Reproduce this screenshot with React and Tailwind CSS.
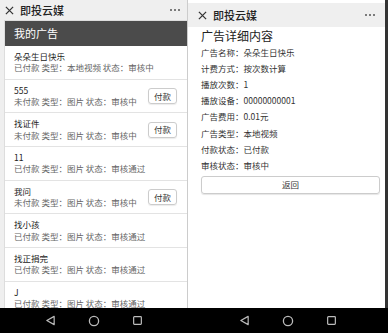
import React from 'react'

const font = { fontFamily: '"Noto Sans CJK SC", "Noto Sans", sans-serif' }

const ads = [
  { name: '朵朵生日快乐', paid: '已付款', type: '本地视频', status: '审核中', pay: false },
  { name: '555', paid: '未付款', type: '图片', status: '审核中', pay: true },
  { name: '找证件', paid: '未付款', type: '图片', status: '审核中', pay: true },
  { name: '11', paid: '已付款', type: '图片', status: '审核通过', pay: false },
  { name: '我问', paid: '未付款', type: '图片', status: '审核中', pay: true },
  { name: '找小孩', paid: '已付款', type: '图片', status: '审核通过', pay: false },
  { name: '找正捐完', paid: '已付款', type: '图片', status: '审核通过', pay: false },
  { name: 'J', paid: '已付款', type: '图片', status: '审核通过', pay: false },
]

const details = [
  ['广告名称', '朵朵生日快乐'],
  ['计费方式', '按次数计算'],
  ['播放次数', '1'],
  ['播放设备', '00000000001'],
  ['广告费用', '0.01元'],
  ['广告类型', '本地视频'],
  ['付款状态', '已付款'],
  ['审核状态', '审核中'],
]

const CloseIcon = () => (
  <svg width="9" height="9" viewBox="0 0 10 10" className="shrink-0">
    <path d="M1 1 L9 9 M9 1 L1 9" stroke="#333" strokeWidth="1.4" />
  </svg>
)

const Dots = () => (
  <span className="flex gap-[2px]">
    <span className="w-[2px] h-[2px] rounded-full bg-[#555]" />
    <span className="w-[2px] h-[2px] rounded-full bg-[#555]" />
    <span className="w-[2px] h-[2px] rounded-full bg-[#555]" />
  </span>
)

const NavIcons = () => (
  <div className="flex-1 flex items-center justify-center gap-[32px]">
    <svg width="11" height="11" viewBox="0 0 12 12">
      <path d="M10 1.5 L2 6 L10 10.5 Z" fill="none" stroke="#bbb" strokeWidth="1.3" strokeLinejoin="round" />
    </svg>
    <svg width="12" height="12" viewBox="0 0 12 12">
      <circle cx="6" cy="6" r="4.6" fill="none" stroke="#bbb" strokeWidth="1.3" />
    </svg>
    <svg width="11" height="11" viewBox="0 0 12 12">
      <rect x="1.8" y="1.8" width="8.4" height="8.4" rx="0.8" fill="none" stroke="#bbb" strokeWidth="1.3" />
    </svg>
  </div>
)

export default function App() {
  return (
    <div className="w-[388px] h-[333px] flex flex-col bg-white overflow-hidden" style={font}>
      <div className="flex flex-1 min-h-0">
        {/* left phone */}
        <div className="w-[187px] shrink-0 flex flex-col bg-[#efefef] overflow-hidden">
          <div className="h-[20px] shrink-0 flex items-center pl-[5px] pr-[7px] gap-[6px]">
            <CloseIcon />
            <span className="text-[11px] font-medium text-[#222]">即投云媒</span>
            <span className="ml-auto"><Dots /></span>
          </div>
          <div className="ml-[4px] flex-1 bg-white border border-[#ddd] border-r-0">
            <div className="h-[25px] bg-[#4b4b4b] flex items-center px-[9px] text-[11px] text-white">我的广告</div>
            {ads.map((a) => (
              <div key={a.name} className="h-[33.7px] border-b border-[#e3e3e3] flex items-center px-[9px]">
                <div className="flex flex-col leading-[11.5px]">
                  <span className="text-[8.5px] text-[#222]">{a.name}</span>
                  <span className="text-[8.5px] text-[#666]">
                    {a.paid} 类型：{a.type} 状态：{a.status}
                  </span>
                </div>
                {a.pay && (
                  <span className="ml-auto mr-[1px] w-[29px] h-[16px] border border-[#ccc] rounded-[3px] flex items-center justify-center text-[8.5px] text-[#333] shadow-[0_1px_1px_rgba(0,0,0,0.08)]">
                    付款
                  </span>
                )}
              </div>
            ))}
          </div>
        </div>
        {/* right phone */}
        <div className="flex-1 flex flex-col border-l border-[#ccc] pt-[3px] bg-white">
          <div className="h-[24px] shrink-0 bg-[#efefef] flex items-center pl-[10px] pr-[10px] gap-[6px]">
            <CloseIcon />
            <span className="text-[11px] font-medium text-[#222]">即投云媒</span>
            <span className="ml-auto"><Dots /></span>
          </div>
          <div className="pl-[13px] pr-[5px] pt-0">
            <div className="text-[12px] text-[#222] leading-[17px]">广告详细内容</div>
            {details.map(([k, v]) => (
              <div key={k} className="h-[16.2px] flex items-center text-[8.5px] text-[#333]">
                {k}：{v}
              </div>
            ))}
            <div className="mt-[2px] h-[18px] border border-[#ccc] rounded-[3px] flex items-center justify-center text-[8.5px] text-[#333] shadow-[0_1px_1px_rgba(0,0,0,0.1)]">
              返回
            </div>
          </div>
        </div>
        <div className="w-[3px] shrink-0 bg-[#333]" />
      </div>
      <div className="h-[25px] shrink-0 bg-black flex">
        <div className="w-[187px] flex"><NavIcons /></div>
        <NavIcons />
      </div>
    </div>
  )
}
